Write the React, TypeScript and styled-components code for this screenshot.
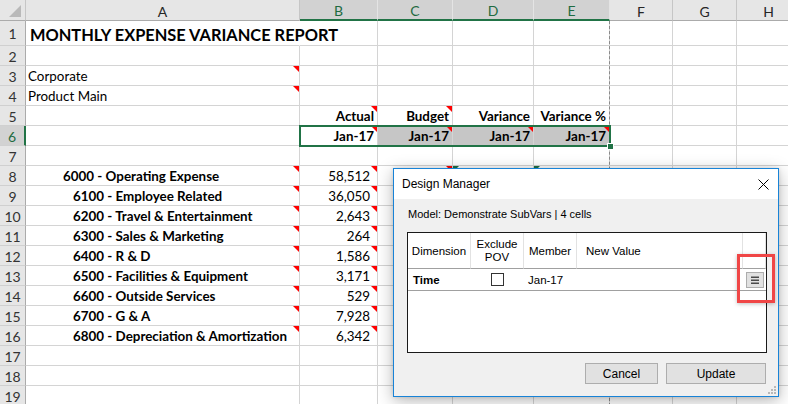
import React, { Fragment } from 'react'
import styled, { createGlobalStyle, css } from 'styled-components'

type CellData = {
  t?: string
  b?: boolean
  r?: boolean
  note?: boolean
  err?: boolean
  fill?: boolean
  pl?: number
  pr?: number
  title?: boolean
  open?: boolean
}

type Pos = { $r: number; $c: number }

const LETTERS = ['A', 'B', 'C', 'D', 'E', 'F', 'G', 'H']

const rows: CellData[][] = Array.from({ length: 19 }, () => Array.from({ length: 8 }, () => ({})))

rows[0][0] = { t: 'MONTHLY EXPENSE VARIANCE REPORT', b: true, title: true, open: true, pl: 4 }
rows[2][0] = { t: 'Corporate', note: true }
rows[3][0] = { t: 'Product Main', note: true }
rows[4][1] = { t: 'Actual', b: true, r: true, note: true }
rows[4][2] = { t: 'Budget', b: true, r: true, note: true }
rows[4][3] = { t: 'Variance', b: true, r: true }
rows[4][4] = { t: 'Variance %', b: true, r: true }
for (let c = 1; c <= 4; c++) {
  rows[5][c] = { t: 'Jan-17', b: true, r: true, note: true, fill: c > 1 }
}
rows[7][2] = { note: true }
rows[7][3] = { err: true }
rows[7][4] = { err: true }

const lines: [string, string][] = [
  ['6000 - Operating Expense', '58,512'],
  ['6100 - Employee Related', '36,050'],
  ['6200 - Travel & Entertainment', '2,643'],
  ['6300 - Sales & Marketing', '264'],
  ['6400 - R & D', '1,586'],
  ['6500 - Facilities & Equipment', '3,171'],
  ['6600 - Outside Services', '529'],
  ['6700 - G & A', '7,928'],
  ['6800 - Depreciation & Amortization', '6,342'],
]
lines.forEach(([label, value], i) => {
  rows[7 + i][0] = { t: label, b: true, note: true, pl: i === 0 ? 37 : 47 }
  rows[7 + i][1] = { t: value, r: true, note: true, pr: 7 }
})

const GlobalStyle = createGlobalStyle`
  html, body {
    margin: 0;
    padding: 0;
    background: #fff;
    overflow: hidden;
  }
`

const at = css<Pos>`
  grid-row: ${(p) => p.$r};
  grid-column: ${(p) => p.$c};
`

const Page = styled.div`
  position: relative;
  width: 788px;
  height: 404px;
  overflow: hidden;
  background: #fff;
`

const Sheet = styled.div`
  display: grid;
  grid-template-columns: 26px 274px 78px 75px 81px 76px 63px 64px 64px;
  grid-template-rows: 21px 25px repeat(18, 20px);
  font-family: Lato, 'Open Sans', sans-serif;
  color: #000;
`

const Corner = styled.div`
  grid-row: 1;
  grid-column: 1;
  position: relative;
  box-sizing: border-box;
  background: #e6e6e6;
  border-right: 1px solid #c6c6c6;
  border-bottom: 1px solid #ababab;
  &::after {
    content: '';
    position: absolute;
    right: 4px;
    bottom: 3px;
    border-bottom: 12px solid #b9b9b9;
    border-left: 12px solid transparent;
  }
`

const ColHead = styled.div<Pos & { $active?: boolean }>`
  ${at}
  box-sizing: border-box;
  display: flex;
  align-items: center;
  justify-content: center;
  padding-top: 2px;
  font-size: 14px;
  background: ${(p) => (p.$active ? '#d2d2d2' : '#e6e6e6')};
  color: ${(p) => (p.$active ? '#1e6b41' : '#262626')};
  border-right: 1px solid ${(p) => (p.$active ? '#e4e4e4' : '#c6c6c6')};
  border-bottom: ${(p) => (p.$active ? '2px solid #217346' : '1px solid #ababab')};
`

const RowHead = styled.div<Pos & { $active?: boolean }>`
  ${at}
  box-sizing: border-box;
  display: flex;
  align-items: center;
  justify-content: center;
  padding-top: 1px;
  font-size: 14px;
  background: ${(p) => (p.$active ? '#d2d2d2' : '#e6e6e6')};
  color: ${(p) => (p.$active ? '#1e6b41' : '#333')};
  border-right: ${(p) => (p.$active ? '2px solid #217346' : '1px solid #ababab')};
  border-bottom: 1px solid #d0d0d0;
`

const Cell = styled.div<
  Pos & {
    $right?: boolean
    $bold?: boolean
    $fill?: boolean
    $pl?: number
    $pr?: number
    $open?: boolean
    $note?: boolean
    $err?: boolean
    $title?: boolean
  }
>`
  ${at}
  position: relative;
  box-sizing: border-box;
  min-width: 0;
  display: flex;
  align-items: flex-end;
  justify-content: ${(p) => (p.$right ? 'flex-end' : 'flex-start')};
  padding: 0 ${(p) => p.$pr ?? 3}px ${(p) => (p.$title ? 0 : 1)}px ${(p) => p.$pl ?? 2}px;
  font-size: ${(p) => (p.$title ? 16.4 : 13.4)}px;
  line-height: ${(p) => (p.$title ? 20 : 15)}px;
  font-weight: ${(p) => (p.$bold ? 700 : 400)};
  white-space: nowrap;
  background: ${(p) => (p.$fill ? '#c6c6c6' : 'transparent')};
  border-right: 1px solid ${(p) => (p.$open ? 'transparent' : '#d4d4d4')};
  border-bottom: 1px solid #d4d4d4;
  ${(p) =>
    p.$note &&
    css`
      &::after {
        content: '';
        position: absolute;
        top: 0;
        right: 0;
        border-top: 6px solid #ff0000;
        border-left: 6px solid transparent;
      }
    `}
  ${(p) =>
    p.$err &&
    css`
      &::before {
        content: '';
        position: absolute;
        top: 0;
        left: 0;
        border-top: 6px solid #1e7145;
        border-right: 6px solid transparent;
      }
    `}
`

const PageBreak = styled.div`
  grid-row: 2 / -1;
  grid-column: 6;
  border-right: 1px dashed #8a8a8a;
  pointer-events: none;
  z-index: 1;
`

const Selection = styled.div`
  position: relative;
  grid-row: 7;
  grid-column: 3 / 7;
  margin: -1px -1px -1px -1px;
  border: 2px solid #217346;
  pointer-events: none;
  z-index: 2;
  &::after {
    content: '';
    position: absolute;
    right: -5px;
    bottom: -5px;
    width: 5px;
    height: 5px;
    background: #217346;
    border: 1px solid #fff;
  }
`

const Dialog = styled.div`
  position: absolute;
  left: 393px;
  top: 168px;
  width: 386px;
  height: 229px;
  box-sizing: border-box;
  display: flex;
  flex-direction: column;
  border: 1px solid #1883d7;
  background: #f0f0f0;
  box-shadow: 0 4px 16px rgba(0, 0, 0, 0.28), 0 0 4px rgba(0, 0, 0, 0.12);
  font-family: 'Liberation Sans', Arial, sans-serif;
  color: #000;
  z-index: 5;
`

const TitleBar = styled.div`
  height: 30px;
  flex: none;
  display: flex;
  align-items: center;
  justify-content: space-between;
  padding-left: 8px;
  background: #fff;
  font-size: 12px;
`

const CloseButton = styled.div`
  width: 30px;
  height: 30px;
  display: flex;
  align-items: center;
  justify-content: center;
`

const DialogBody = styled.div`
  flex: 1;
  display: flex;
  flex-direction: column;
  padding: 8px 11px 12px 13px;
`

const ModelLine = styled.div`
  font-size: 11px;
  line-height: 14px;
  margin: 0 0 11px 1px;
`

const GridBox = styled.div`
  height: 121px;
  box-sizing: border-box;
  display: grid;
  grid-template-columns: 63px 53px 53px 166px 23px;
  grid-template-rows: 36px 22px 1fr;
  border: 1px solid #1a1a1a;
  background: #fff;
  font-size: 11.5px;
`

const HeadCell = styled.div<{ $left?: boolean }>`
  box-sizing: border-box;
  display: flex;
  align-items: center;
  justify-content: ${(p) => (p.$left ? 'flex-start' : 'center')};
  padding: 1px ${(p) => (p.$left ? '9px' : '2px')} 0;
  text-align: center;
  line-height: 13px;
  border-right: 1px solid #e2e2e2;
  border-bottom: 1px solid #a0a0a0;
`

const DataCell = styled.div<{ $center?: boolean; $bold?: boolean; $pl?: number }>`
  box-sizing: border-box;
  display: flex;
  align-items: center;
  justify-content: ${(p) => (p.$center ? 'center' : 'flex-start')};
  padding-left: ${(p) => p.$pl ?? 0}px;
  font-weight: ${(p) => (p.$bold ? 700 : 400)};
  border-bottom: 1px solid #a0a0a0;
`

const Check = styled.span`
  width: 13px;
  height: 13px;
  box-sizing: border-box;
  border: 1px solid #333;
  background: #fff;
`

const MenuButton = styled.span`
  width: 18px;
  height: 16px;
  box-sizing: border-box;
  display: flex;
  align-items: center;
  justify-content: center;
  background: #e1e1e1;
  border: 1px solid #adadad;
`

const ButtonRow = styled.div`
  display: flex;
  justify-content: flex-end;
  gap: 8px;
  margin: 10px 1px 0 0;
`

const DlgButton = styled.div<{ $w: number }>`
  width: ${(p) => p.$w}px;
  height: 21px;
  box-sizing: border-box;
  display: flex;
  align-items: center;
  justify-content: center;
  background: #e1e1e1;
  border: 1px solid #adadad;
  font-size: 12px;
`

const Highlight = styled.div`
  position: absolute;
  left: 343px;
  top: 85px;
  width: 38px;
  height: 49px;
  box-sizing: border-box;
  border: 3px solid #f04646;
  box-shadow: 0 1px 4px rgba(0, 0, 0, 0.25);
  pointer-events: none;
`

const Grip = styled.svg`
  position: absolute;
  right: 2px;
  bottom: 2px;
`

export default function App() {
  return (
    <>
      <GlobalStyle />
      <Page>
        <Sheet>
          <Corner />
          {LETTERS.map((l, i) => (
            <ColHead key={l} $r={1} $c={i + 2} $active={i >= 1 && i <= 4}>
              {l}
            </ColHead>
          ))}
          {rows.map((row, ri) => (
            <Fragment key={ri}>
              <RowHead $r={ri + 2} $c={1} $active={ri === 5}>
                {ri + 1}
              </RowHead>
              {row.map((c, ci) => (
                <Cell
                  key={ci}
                  $r={ri + 2}
                  $c={ci + 2}
                  $right={c.r}
                  $bold={c.b}
                  $fill={c.fill}
                  $pl={c.pl}
                  $pr={c.pr}
                  $open={c.open}
                  $note={c.note}
                  $err={c.err}
                  $title={c.title}
                >
                  {c.t}
                </Cell>
              ))}
            </Fragment>
          ))}
          <PageBreak />
          <Selection />
        </Sheet>

        <Dialog>
          <TitleBar>
            <span>Design Manager</span>
            <CloseButton>
              <svg width="11" height="11" viewBox="0 0 11 11">
                <path d="M0.5 0.5 L10.5 10.5 M10.5 0.5 L0.5 10.5" stroke="#000" strokeWidth="1" />
              </svg>
            </CloseButton>
          </TitleBar>
          <DialogBody>
            <ModelLine>Model: Demonstrate SubVars | 4 cells</ModelLine>
            <GridBox>
              <HeadCell>Dimension</HeadCell>
              <HeadCell>
                Exclude
                <br />
                POV
              </HeadCell>
              <HeadCell>Member</HeadCell>
              <HeadCell $left>New Value</HeadCell>
              <HeadCell />
              <DataCell $bold $pl={5}>
                Time
              </DataCell>
              <DataCell $center>
                <Check />
              </DataCell>
              <DataCell $pl={4}>Jan-17</DataCell>
              <DataCell />
              <DataCell $center>
                <MenuButton>
                  <svg width="8" height="8" viewBox="0 0 8 8">
                    <rect x="0" y="0.5" width="8" height="1.5" fill="#4a4a4a" />
                    <rect x="0" y="3.5" width="8" height="1.5" fill="#4a4a4a" />
                    <rect x="0" y="6.5" width="8" height="1.5" fill="#4a4a4a" />
                  </svg>
                </MenuButton>
              </DataCell>
            </GridBox>
            <ButtonRow>
              <DlgButton $w={73}>Cancel</DlgButton>
              <DlgButton $w={100}>Update</DlgButton>
            </ButtonRow>
          </DialogBody>
          <Highlight />
          <Grip width="10" height="10" viewBox="0 0 10 10">
            <rect x="8" y="2" width="2" height="2" fill="#b8b8b8" />
            <rect x="5" y="5" width="2" height="2" fill="#b8b8b8" />
            <rect x="8" y="5" width="2" height="2" fill="#b8b8b8" />
            <rect x="2" y="8" width="2" height="2" fill="#b8b8b8" />
            <rect x="5" y="8" width="2" height="2" fill="#b8b8b8" />
            <rect x="8" y="8" width="2" height="2" fill="#b8b8b8" />
          </Grip>
        </Dialog>
      </Page>
    </>
  )
}
